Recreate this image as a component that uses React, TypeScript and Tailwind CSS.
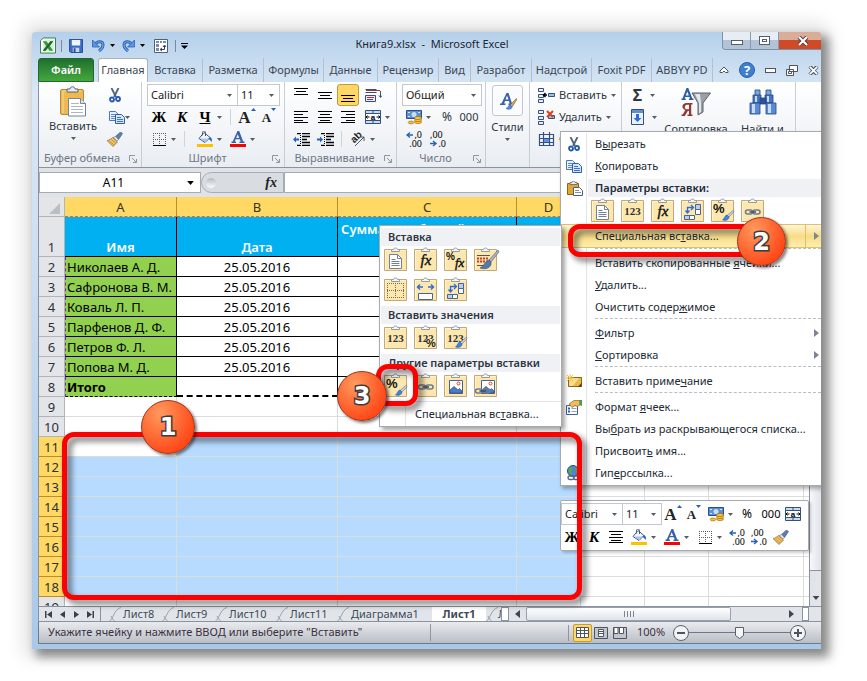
import React from "react";
import clsx from "clsx";

interface IconProps {
  className?: string;
}

interface BoxProps {
  className?: string;
  title?: string;
  children?: React.ReactNode;
}

/* ---------- small icons ---------- */

const Caret = ({ className = "w-[5px] h-[3px] text-[#555b66]" }: IconProps) => (
  <svg viewBox="0 0 5 3" className={clsx("shrink-0", className)} fill="currentColor">
    <path d="M0 0h5L2.5 3z" />
  </svg>
);

const SideArrow = ({ className }: IconProps) => (
  <svg viewBox="0 0 5 8" className={clsx("h-2 w-[5px] shrink-0", className)} fill="currentColor">
    <path d="M0 0l5 4-5 4z" />
  </svg>
);

const LaunchIcon = () => (
  <svg width="8" height="8" viewBox="0 0 8 8" fill="none" stroke="#8d95a1">
    <path d="M.5 6V.5H6M3 3l4 4M7.500 4v3.500H4" />
  </svg>
);

const ExcelIcon = () => (
  <svg width="16" height="17" viewBox="0 0 17 17">
    <path d="M3.500.5h13v16h-16v-13z" fill="#fff" stroke="#2c7a3f" />
    <path d="M5 2h10v13H3V4z" fill="#dcefd8" />
    <path d="M3 4h4l2 3 2-3h3l-3.500 5 3.500 5h-4l-2-3-2 3H3l3.500-5z" fill="#2f9a3f" />
    <path d="M11 4h3l-8 10H3z" fill="#1d6b2c" />
  </svg>
);

const SaveIcon = () => (
  <svg width="14" height="14" viewBox="0 0 15 15">
    <path d="M.5.5h14v14H2l-1.500-1.500z" fill="#3b6cc4" stroke="#234a94" />
    <path d="M3 1h9v6H3z" fill="#eef4fc" />
    <path d="M4 9.500h7V14H4z" fill="#c9d6ea" />
    <path d="M5 10h2v4H5z" fill="#234a94" />
  </svg>
);

const UndoIcon = ({ className }: IconProps) => (
  <svg width="13" height="13" viewBox="0 0 13 13" className={className}>
    <path d="M3 5.500C5 2 11 1.500 11 6c0 3-2 4.500-4 6" fill="none" stroke="#2f5fb5" strokeWidth="3" />
    <path d="M3 5.500C5 2 11 1.500 11 6c0 3-2 4.500-4 6" fill="none" stroke="#6ba3ea" strokeWidth="1.200" />
    <path d="M.5 1v7h7z" fill="#5b95e3" stroke="#2f5fb5" strokeWidth=".8" />
  </svg>
);

const PivotIcon = () => (
  <svg width="14" height="14" viewBox="0 0 14 14">
    <path d="M.5.5h13v13H.5z" fill="#fff" stroke="#4d5f80" />
    <path d="M2 2h3v2H2zM6 2h2v2H6zM9 2h3v2H9zM2 5h3v3H2zM2 9h3v3H2z" fill="#7d8aa3" />
    <path d="M7 10.500h3.500V7M9 8l1.500-2L12 8M8 9l-2 1.500L8 12" fill="none" stroke="#333c50" />
  </svg>
);

const PasteBig = () => (
  <svg width="28" height="31" viewBox="0 0 28 31">
    <rect x="1.500" y="3.500" width="23" height="25" rx="1.500" fill="#ecb953" stroke="#b98936" />
    <path d="M4 27V5h18" fill="none" stroke="#f7d995" />
    <path d="M8 6V3h3c0-3 5-3 5 0h3v3z" fill="#e9edf2" stroke="#59606b" />
    <path d="M9.500 12.500h12l5 5v12.500h-17z" fill="#fff" stroke="#77839a" />
    <path d="M21.500 12.500v5h5" fill="#dbe4f1" stroke="#77839a" />
    <path d="M12 17.500h8M12 20.500h12M12 23.500h12M12 26.500h12" stroke="#a8b5ca" />
  </svg>
);

const CutIcon = () => (
  <svg width="12" height="15" viewBox="0 0 12 15" fill="none">
    <path d="M2.500 0l4.500 9M9.500 0L5 9" stroke="#4f6379" strokeWidth="1.800" />
    <circle cx="3" cy="11.500" r="2" stroke="#2458b4" strokeWidth="1.800" />
    <circle cx="9" cy="11" r="2" stroke="#2458b4" strokeWidth="1.800" />
  </svg>
);

const CopyIcon = () => (
  <svg width="16" height="13" viewBox="0 0 16 13">
    <path d="M.5.5h6l3 3v6h-9z" fill="#e6f0fc" stroke="#4f77b5" />
    <path d="M2 3.500h4M2 5.500h4M2 7.500h4" stroke="#5f8bd0" />
    <path d="M6.500 3.500h6l3 3v6h-9z" fill="#d5e6fb" stroke="#2f5ca8" />
    <path d="M8 6.500h4M8 8.500h6M8 10.500h6" stroke="#3c73c4" />
  </svg>
);

const BrushIcon = () => (
  <svg width="16" height="15" viewBox="0 0 16 15">
    <path d="M15.500 1.500L13.500 0 8.500 4.500l3 3z" fill="#5d7fb0" stroke="#3b4d6b" strokeWidth=".6" />
    <path d="M8.500 4.500l3 3-1.500 1.500-4-3.500z" fill="#dde3ea" stroke="#6f7a8a" strokeWidth=".6" />
    <path d="M5.500 5.500l5 4.500L6 14.500 0 8.500c2-.2 4-1.500 5.500-3z" fill="#efc268" stroke="#8b6321" strokeWidth=".7" />
    <path d="M2.500 9l4.500 4M4.500 7.500L9 11.500" stroke="#b17f2e" strokeWidth=".7" />
  </svg>
);

const BordersIcon = () => (
  <svg width="13" height="13" viewBox="0 0 13 13" fill="none">
    <path d="M.5 0v12M6.500 0v12M12.500 0v12M0 .5h13M0 6.500h13" stroke="#58606c" strokeDasharray="1 1" />
    <path d="M0 12.500h13" stroke="#000" />
  </svg>
);

const FillIcon = () => (
  <svg width="16" height="16" viewBox="0 0 16 16">
    <path d="M7 1.500l6 5-5 5-6-4z" fill="#f2f6fb" stroke="#3c5b8c" />
    <path d="M3 7.500h9L8 11z" fill="#a9c6ea" />
    <path d="M5.500 4.500V1.500c0-2 3-2 3 0V5" fill="none" stroke="#4b5563" />
    <path d="M13 6c2 1 2.500 3 1.500 5-.8-1.500-1.500-2.500-3-3z" fill="#2860b8" />
    <path d="M0 13h16v3H0z" fill="#ffc000" />
  </svg>
);

const FontColorIcon = () => (
  <svg width="16" height="16" viewBox="0 0 16 16">
    <path d="M7.500 0h1.700l4 10.500h1.300V12h-5v-1.500h1.200l-.8-2.200H5.600l-.8 2.200H6V12H1.500v-1.500h1.200zM7.700 3.300L6.200 7h3z" fill="#3a62ab" />
    <path d="M0 13h16v3H0z" fill="#f00" />
  </svg>
);

const linePaths = {
  top: "M1 .5h14M3 3.500h10M1 6.500h14",
  middle: "M1 4.500h14M3 7.500h10M1 10.500h14",
  bottom: "M1 7.500h14M3 10.500h10M1 13.500h14",
  left: "M1 1.500h14M1 4.500h9M1 7.500h14M1 10.500h9M1 12.500h14",
  center: "M1 1.500h14M3 4.500h10M1 7.500h14M3 10.500h10M1 12.500h14",
  right: "M1 1.500h14M6 4.500h9M1 7.500h14M6 10.500h9M1 12.500h14",
};

const LinesIcon = ({ kind }: { kind: keyof typeof linePaths }) => (
  <svg width="16" height="14" viewBox="0 0 16 14" stroke="#000" strokeWidth="1.200">
    <path d={linePaths[kind]} />
  </svg>
);

const IndentIcon = ({ out }: { out?: boolean }) => (
  <svg width="17" height="13" viewBox="0 0 17 13" fill="none">
    <path d="M4 .5h3M9 .5h8M4 12.500h3M9 12.500h8M9 3.500h8M9 6.500h5M9 9.500h8" stroke="#000" strokeWidth="1.300" />
    <path d="M7.500 0v13" stroke="#000" strokeDasharray="1 1" />
    <path d={out ? "M0 6.500l3-3v2h3v2H3v2z" : "M6 6.500l-3-3v2H0v2h3v2z"} fill="#2860b8" />
  </svg>
);

const WrapIcon = () => (
  <svg width="17" height="15" viewBox="0 0 17 15" fill="none">
    <path d="M.5 1.500h11M.5 4.500h11" stroke="#35507f" />
    <path d="M.5 7.500h10v6H.5z" fill="#e5edf8" stroke="#35507f" />
    <path d="M1 2.500h14M2 9.500h7M2 11.500h6" stroke="#a0353a" />
    <path d="M15.500 3v6M14 7.500l1.500 2 1.500-2" stroke="#35507f" />
  </svg>
);

const MergeIcon = () => (
  <svg width="16" height="14" viewBox="0 0 16 14" fill="none">
    <path d="M.5.5h15v13H.5z" fill="#c7dbf4" stroke="#35507f" />
    <path d="M0 3.500h16M0 10.500h16M8 0v3M8 11v3" stroke="#35507f" />
    <path d="M1 4h14v6H1z" fill="#fff" />
    <path d="M1 7h3.500M15 7h-3.500M2.500 5.500L1 7l1.500 1.500M13.500 5.500L15 7l-1.500 1.500" stroke="#000" />
    <text x="8" y="9.500" textAnchor="middle" fontFamily="Liberation Sans" fontSize="8" fontWeight="700" fill="#000">a</text>
  </svg>
);

const OrientIcon = () => (
  <svg width="16" height="16" viewBox="0 0 16 16">
    <text x="2" y="11" transform="rotate(-45 5 9)" fontFamily="Liberation Sans" fontSize="10" fontWeight="700" fill="#222">ab</text>
    <path d="M5 15l9-9M14 10V6h-4" fill="none" stroke="#555" />
  </svg>
);

const MoneyIcon = () => (
  <svg width="17" height="16" viewBox="0 0 17 16">
    <path d="M.5 1.500h15v8H.5z" fill="#5e8fd4" stroke="#2a4f91" />
    <circle cx="8" cy="5.500" r="2.500" fill="#c9defa" />
    <path d="M2 3.500h2M12 3.500h2M2 7.500h2" stroke="#dbe9fb" />
    <g fill="#f5c33c" stroke="#a4710f" strokeWidth=".7">
      <ellipse cx="12" cy="13" rx="3.500" ry="1.600" />
      <ellipse cx="12" cy="11" rx="3.500" ry="1.600" />
      <ellipse cx="12" cy="9" rx="3.500" ry="1.600" />
      <ellipse cx="5" cy="13.500" rx="2.800" ry="1.400" />
    </g>
  </svg>
);

const DecimalIcon = ({ less }: { less?: boolean }) => (
  <svg width="17" height="16" viewBox="0 0 17 16" fontFamily="Noto Sans" fontSize="9" fontWeight="500" fill="#222">
    <text x={less ? 0 : 16} y="7" textAnchor={less ? "start" : "end"}>{less ? ",00" : ",0"}</text>
    <text x="16" y="16" textAnchor="end">{less ? ",0" : ",00"}</text>
    <path d={less ? "M0 12.500h5M3 10l3 2.500L3 15" : "M7 4H2M4 1.500L1 4l3 2.500"} fill="none" stroke="#2860b8" strokeWidth="1.400" />
  </svg>
);

const StylesIcon = () => (
  <svg width="18" height="18" viewBox="0 0 18 18">
    <path d="M7.500 1h2l3.500 10.500h1.500V13H9.500v-1.500h1L10 9H6l-.8 2.500h1.300V13H1v-1.500h1.500zM8 3.500L6.500 7.500h3z" fill="#3a62ab" />
    <path d="M17.500 6.500L11 13l2 2 4.500-7z" fill="#d9a24b" stroke="#7b5d2d" strokeWidth=".6" />
    <path d="M11 13c-2 0-1 2.500-4 3.500 3 1.500 6 .5 6-1.500z" fill="#4f8be0" stroke="#2860b8" strokeWidth=".6" />
  </svg>
);

const CellsIcon = ({ kind }: { kind: "insert" | "delete" | "format" }) => (
  <svg width="17" height="15" viewBox="0 0 17 15" fill="none" stroke="#35507f">
    {kind === "format" ? (
      <>
        <path d="M1.500 2.500h14v11h-14zM1 6.500h15M1 10.500h15M5.500 0v14M11.500 0v14" strokeWidth="1.200" />
        <path d="M6 7h5v3H6z" fill="#5b95e3" stroke="none" />
      </>
    ) : (
      <>
        <path d="M.5.5h5v3h-5zM.5 6.500h5v3h-5zM.5 11.500h5v3h-5z" fill="#e7eef8" />
        <path d="M10.500 5.500h6v3h-6z" fill="#9dbfe9" />
        {kind === "insert" ? <path d="M9 7H6M7.500 5L5.500 7l2 2" stroke="#000" strokeWidth="1.400" /> : <path d="M9 1l6 6M15 1L9 7" stroke="#e0401c" strokeWidth="2" />}
      </>
    )}
  </svg>
);

const FillDownIcon = () => (
  <svg width="13" height="16" viewBox="0 0 13 16">
    <path d="M.5.5h12v15H.5z" fill="#e8f1fc" stroke="#35507f" />
    <path d="M1 1h11v3H1z" fill="#5e8fd4" />
    <path d="M5 5h3v4h2.500l-4 4-4-4H5z" fill="#2d6cd0" />
  </svg>
);

const SortIcon = () => (
  <svg width="30" height="29" viewBox="0 0 30 29">
    <path d="M11 5h18.500L22 15v9l-5 3V15z" fill="#9aa0a8" stroke="#5c626b" />
    <path d="M14 6h5l1 9v9l-2 1.500V15z" fill="#e3e6ea" />
    <path d="M5.500 0h1.800l4 10.500h1.200V12H8v-1.500h1L8.500 9H4.200l-.6 1.500h1.200V12H.5v-1.500h1zM6.300 3.500L4.800 7.500h3z" fill="#2f5ca8" />
    <path d="M11.500 15v1.500h-1.300v10h1.300V28H6.500v-1.500H8V23H6.800l-3 5H.5v-1.500h1.300L4.300 22C0 20.500.8 15 5.500 15zM8 16.700H6c-2.800 0-2.800 4.600 0 4.600h2z" fill="#9c3531" />
  </svg>
);

const FindIcon = () => (
  <svg width="28" height="26" viewBox="0 0 28 26" stroke="#24467f" strokeWidth=".8">
    <path d="M6 1h5v6H6zM17 1h5v6h-5z" fill="#7ea4dd" />
    <path d="M4 6h8v8H4zM16 6h8v8h-8z" fill="#4676c2" />
    <path d="M11 9h6v6h-6z" fill="#2c549b" />
    <path d="M1 14h10v11H1zM17 14h10v11H17z" fill="#5b8bd6" />
    <path d="M3 15h3v9H3zM19 15h3v9h-3zM6 7h2v6H6zM18 7h2v6h-2z" fill="#c6dbf8" stroke="none" />
  </svg>
);

/* ---------- paste option tiles ---------- */

type TileKind =
  | "paste" | "values" | "fx" | "transpose" | "format" | "link" | "fxFormat" | "source"
  | "noBorder" | "width" | "valuesPct" | "valuesBrush" | "picture" | "pictureLink";

const MiniBrush = () => (
  <g>
    <path d="M22.500 11L16 16.500l1.500 2L23 13z" fill="#c9ced6" stroke="#5b6470" strokeWidth=".5" />
    <path d="M16 16c-2 0-2.500 3.500-4.500 5 3 1 6.500 0 6.500-3z" fill="#3f82de" stroke="#22529e" strokeWidth=".5" />
  </g>
);

const MiniLink = () => (
  <g fill="none" stroke="#6d7b93" strokeWidth="1.600">
    <rect x="4.500" y="11" width="7" height="4" rx="2" />
    <rect x="12" y="11" width="7" height="4" rx="2" />
    <path d="M8.500 13h6.500" stroke="#414e66" />
  </g>
);

const MiniPicture = () => (
  <g>
    <path d="M5.500 6.500h13v13h-13z" fill="#fff" stroke="#4a6390" />
    <path d="M6 19v-3l4-3.500 4 3.500 1.500-1.500 2.500 2.500v2z" fill="#4b7dc4" stroke="#2d4d83" strokeWidth=".7" />
    <circle cx="14.500" cy="9.500" r="1.500" fill="#fff" stroke="#d2452c" />
  </g>
);

const Num = () => (
  <text x="11.500" y="15.500" textAnchor="middle" fontFamily="Liberation Serif" fontSize="11" fontWeight="700" fill="#333">123</text>
);

const tileArt: Record<TileKind, React.ReactNode> = {
  paste: (
    <>
      <path d="M5.500 6.500h8l4 4v10h-12z" fill="#fff" stroke="#71809b" />
      <path d="M13.500 6.500v4h4M7.500 11.500h4M7.500 13.500h8M7.500 15.500h8M7.500 17.500h8" fill="none" stroke="#71809b" />
    </>
  ),
  values: <Num />,
  fx: (
    <text x="12" y="17" textAnchor="middle" fontFamily="Liberation Serif" fontSize="15" fontStyle="italic" fill="#111" stroke="#111" strokeWidth=".4">fx</text>
  ),
  transpose: (
    <>
      <path d="M14.500 5.500h5v5h-5zM3.500 16.500h5v4h-5z" fill="#b8d0ef" stroke="#4a6390" />
      <path d="M14.500 10.500h5v5h-5zM8.500 16.500h5v4h-5z" fill="#fff" stroke="#4a6390" />
      <path d="M6.500 13V8.500h5M4.500 11.500l2 2.500 2-2.500M10 6l2.500 2.500L10 11" fill="none" stroke="#2d6cd0" strokeWidth="1.300" />
    </>
  ),
  format: (
    <>
      <text x="2" y="14" fontFamily="Liberation Sans" fontSize="13" fontWeight="700" fill="#111">%</text>
      <MiniBrush />
    </>
  ),
  link: <MiniLink />,
  fxFormat: (
    <>
      <text x="2" y="12" fontFamily="Liberation Sans" fontSize="10" fontWeight="700" fill="#111">%</text>
      <text x="11" y="19" fontFamily="Liberation Serif" fontSize="13" fontStyle="italic" fill="#111" stroke="#111" strokeWidth=".4">fx</text>
    </>
  ),
  source: (
    <>
      <path d="M3 7.500h13M3 17.500h13" stroke="#555" />
      <path d="M3 10.500h12M3 13.500h11" stroke="#d8351c" strokeWidth="2" strokeDasharray="2 1" />
      <path d="M24 2l-9 10 2 2 8-10z" fill="#aab2bd" stroke="#555d69" strokeWidth=".6" />
      <path d="M15 12c-4 1-4 5-9 8 5 2 12 0 11-6z" fill="#5679ab" stroke="#32507e" strokeWidth=".6" />
    </>
  ),
  noBorder: (
    <path d="M3.500 5v15M11.500 5v15M19.500 5v15M3 5.500h17M3 12.500h17M3 19.500h17" stroke="#77704f" strokeDasharray="1 1" />
  ),
  width: (
    <>
      <path d="M4 9h5M6 6.500L3.500 9 6 11.500M19 9h-5M17 6.500L19.500 9 17 11.500" fill="none" stroke="#2d6cd0" strokeWidth="1.400" />
      <path d="M4.500 21.500v-6h14v6z" fill="#fff" stroke="#4a6390" />
    </>
  ),
  valuesPct: (
    <>
      <Num />
      <path d="M13 13h8v8h-8z" fill="#fce8ae" />
      <text x="12" y="21" fontFamily="Liberation Sans" fontSize="11" fontWeight="700" fill="#222">%</text>
    </>
  ),
  valuesBrush: (
    <>
      <Num />
      <MiniBrush />
    </>
  ),
  picture: <MiniPicture />,
  pictureLink: (
    <>
      <g transform="translate(2 0)">
        <MiniPicture />
      </g>
      <g transform="translate(-3 4)">
        <MiniLink />
      </g>
    </>
  ),
};

const PasteTile = ({ kind, title }: { kind: TileKind; title: string }) => (
  <button title={title} aria-label={title} className="h-6 w-[23px] shrink-0">
    <svg width="23" height="24" viewBox="0 0 23 24" className="overflow-visible">
      <path d="M.5 1.500h22v21H.5z" fill="#fce8ae" stroke="#c4a878" />
      <path d="M1.500 22V2.500h20" fill="none" stroke="#fff4d2" />
      <path d="M7.500 3.500v-2h2c0-2 4-2 4 0h2v2z" fill="#f6f6f6" stroke="#9a9a9a" />
      {tileArt[kind]}
    </svg>
  </button>
);

/* ---------- ribbon parts ---------- */

const Btn = ({ className = "w-6", title, children }: BoxProps) => (
  <button title={title} className={clsx("flex h-[22px] shrink-0 items-center justify-center", className)}>
    {children}
  </button>
);

const Sep = () => <span className="mx-1 h-4 w-px shrink-0 bg-[#cfd4db]" />;

const Combo = ({ label, value, className }: { label: string; value: string; className?: string }) => (
  <span className={clsx("relative flex h-[22px] shrink-0 items-center border border-[#c3c8cf] bg-white", className)}>
    <select aria-label={label} defaultValue={value} className="w-full appearance-none bg-transparent pl-[3px] text-[11px] text-[#222] outline-none">
      <option>{value}</option>
    </select>
    <Caret className="pointer-events-none absolute right-[5px] h-[3px] w-[5px] text-[#555b66]" />
  </span>
);

const GrowFont = () => (
  <span className="flex items-start font-['Liberation_Serif',serif] text-[17px] leading-[19px] font-bold text-[#222]">
    A
    <Caret className="h-[3px] w-[5px] rotate-180 text-[#2860b8]" />
  </span>
);

const ShrinkFont = () => (
  <span className="flex items-start font-['Liberation_Serif',serif] text-[13px] leading-[19px] font-bold text-[#222]">
    A
    <Caret className="h-[3px] w-[5px] text-[#2860b8]" />
  </span>
);

const Group = ({ label, className, launcher, children }: { label?: string; className?: string; launcher?: boolean; children?: React.ReactNode }) => (
  <section className={clsx("flex shrink-0 flex-col border-r border-[#c8ced6] pt-0.5", className)}>
    <div className="h-[66px]">{children}</div>
    <div className="flex h-[17px] items-center text-[#6c7785]">
      <span className="flex-1 text-center whitespace-nowrap">{label}</span>
      {launcher && (
        <button title={label} className="px-1">
          <LaunchIcon />
        </button>
      )}
    </div>
  </section>
);

const tabs = [
  { name: "Вставка", width: "w-[55px]" },
  { name: "Разметка", width: "w-[61px]" },
  { name: "Формулы", width: "w-[60px]" },
  { name: "Данные", width: "w-[54px]" },
  { name: "Рецензир", width: "w-[61px]" },
  { name: "Вид", width: "w-8" },
  { name: "Разработ", width: "w-[61px]" },
  { name: "Надстрой", width: "w-[60px]" },
  { name: "Foxit PDF", width: "w-[60px]" },
  { name: "ABBYY PD", width: "w-[61px]" },
];

const TitleBar = () => (
  <header className="flex h-[26px] items-start pl-2">
    <div className="flex h-[26px] items-center gap-[5px] pt-px">
      <ExcelIcon />
      <span className="h-3 w-px bg-[#7b8898]" />
      <button title="Сохранить" className="ml-0.5"><SaveIcon /></button>
      <button title="Отменить" className="ml-1"><UndoIcon /></button>
      <Caret className="h-[3px] w-[5px] text-black" />
      <button title="Вернуть" className="ml-0.5"><UndoIcon className="-scale-x-100" /></button>
      <Caret className="h-[3px] w-[5px] text-black" />
      <button title="Сводная таблица" className="ml-1"><PivotIcon /></button>
      <span className="ml-0.5 h-3 w-px bg-[#7b8898]" />
      <svg width="7" height="6" viewBox="0 0 7 6"><path d="M0 0h7v1H0zM0 2.500h7L3.500 6z" /></svg>
    </div>
    <h1 className="flex-1 pt-1 pr-[46px] text-center leading-4 whitespace-pre text-[#1d2733]">Книга9.xlsx  -  Microsoft Excel</h1>
    <div className="flex h-[18px] overflow-hidden rounded-bl-[4px] border-b border-l border-[#7f8fa6]">
      <button title="Свернуть" className="flex w-7 items-end justify-center border-r border-[#8a99ad] bg-linear-to-b from-[#e6edf5] from-45% to-[#b3c3d6] to-50% pb-1">
        <span className="h-[5px] w-3 border border-[#555e6b] bg-white" />
      </button>
      <button title="Развернуть" className="flex w-7 items-center justify-center border-r border-[#8a99ad] bg-linear-to-b from-[#e6edf5] from-45% to-[#b3c3d6] to-50%">
        <span className="h-[9px] w-[11px] border border-[#555e6b] bg-white p-0.5">
          <span className="block h-full border border-[#555e6b]" />
        </span>
      </button>
      <button title="Закрыть" className="flex w-[42px] items-center justify-center bg-linear-to-b from-[#d9ad97] from-45% to-[#d04a26] to-50% pl-1.5">
        <svg width="12" height="10" viewBox="0 0 12 10"><path d="M2 1l8 8M10 1L2 9" stroke="#4b3c3c" strokeWidth="4" /><path d="M2 1l8 8M10 1L2 9" stroke="#fff" strokeWidth="2.200" /></svg>
      </button>
    </div>
  </header>
);

const TabRow = () => (
  <nav className="ml-1.5 flex h-6 items-stretch text-[#3c4754]">
    <button className="mr-1 w-14 shrink-0 rounded-t-[3px] border border-[#1c6b2c] bg-linear-to-b from-[#1f7030] to-[#45a83c] font-semibold text-white">Файл</button>
    <button className="w-[50px] shrink-0 rounded-t-[3px] border border-b-0 border-[#a9b3bf] bg-white whitespace-nowrap">
      <span className="flex justify-center">Главная</span>
    </button>
    {tabs.map((tab) => (
      <button key={tab.name} className={clsx("shrink-0 overflow-hidden border-r border-[#b4c0ce] whitespace-nowrap", tab.width)}>
        <span className="flex justify-center">{tab.name}</span>
      </button>
    ))}
    <div className="flex shrink-0 items-center gap-2.5 pl-1.5">
      <svg width="10" height="8" viewBox="0 0 10 8"><path d="M1 6.500V5l4-4 4 4v1.500H6.500L5 5 3.500 6.500z" fill="#fff" stroke="#4b5563" /></svg>
      <button title="Справка" className="flex h-4 w-4 items-center justify-center rounded-full border border-[#2c5ea8] bg-[#3f7fd0] text-[13px] leading-none font-bold text-white">?</button>
      <span className="h-[5px] w-[11px] border border-[#4b5563] bg-white" />
      <svg width="12" height="11" viewBox="0 0 12 11"><path d="M3.500.5h8v6h-8zM.5 4.500h7v6h-7z" fill="#fff" stroke="#4b5563" /><path d="M2.500 6.500h3v2h-3z" fill="#fff" stroke="#4b5563" /></svg>
      <svg width="11" height="9" viewBox="0 0 12 9"><path d="M2 0l8 9M10 0L2 9" stroke="#4b5563" strokeWidth="4" /><path d="M2 .5l8 8M10 .5l-8 8" stroke="#fff" strokeWidth="2" /></svg>
    </div>
  </nav>
);

const Ribbon = () => (
  <div className="ml-1.5 flex h-[86px] overflow-hidden border-b border-l border-[#8b939e] bg-linear-to-b from-white to-[#e9edf2] text-[#2d3642]">
    <Group label="Буфер обмена" launcher className="w-[103px]">
      <div className="flex">
        <button className="flex w-[68px] flex-col items-center pt-0.5">
          <PasteBig />
          <span className="leading-[18px]">Вставить</span>
          <Caret className="mt-0.5 h-[3px] w-[5px] text-[#555b66]" />
        </button>
        <div className="flex flex-col items-start">
          <Btn className="w-4" title="Вырезать"><CutIcon /></Btn>
          <Btn className="w-6 justify-between" title="Копировать"><CopyIcon /><Caret /></Btn>
          <Btn className="w-4" title="Формат по образцу"><BrushIcon /></Btn>
        </div>
      </div>
    </Group>

    <Group label="Шрифт" launcher className="w-[143px] pl-[5px]">
      <div className="flex">
        <Combo label="Шрифт" value="Calibri" className="w-[91px]" />
        <Combo label="Размер шрифта" value="11" className="-ml-px w-[43px]" />
      </div>
      <div className="flex items-center font-['Liberation_Serif',serif] text-[15px] font-bold text-black">
        <Btn title="Полужирный">Ж</Btn>
        <Btn className="w-[22px]" title="Курсив"><i>К</i></Btn>
        <Btn title="Подчеркнутый"><span className="underline">Ч</span></Btn>
        <Caret />
        <span className="w-1" />
        <Sep />
        <Btn title="Увеличить размер"><GrowFont /></Btn>
        <Btn className="w-5" title="Уменьшить размер"><ShrinkFont /></Btn>
      </div>
      <div className="flex items-center">
        <Btn title="Границы"><BordersIcon /></Btn>
        <Caret />
        <span className="w-1" />
        <Sep />
        <Btn title="Цвет заливки" className="ml-1 w-6"><FillIcon /></Btn>
        <Caret />
        <Btn title="Цвет текста" className="ml-1 w-6"><FontColorIcon /></Btn>
        <Caret />
      </div>
    </Group>

    <Group label="Выравнивание" launcher className="w-[112px] pl-1">
      <div className="flex">
        <Btn title="По верхнему краю"><LinesIcon kind="top" /></Btn>
        <Btn title="По середине"><LinesIcon kind="middle" /></Btn>
        <Btn title="По нижнему краю" className="w-[22px] rounded-[3px] border border-[#c29b3a] bg-[#ffd766]"><LinesIcon kind="bottom" /></Btn>
        <Btn title="Перенос текста" className="ml-0.5 w-6"><WrapIcon /></Btn>
      </div>
      <div className="flex items-center">
        <Btn title="По левому краю"><LinesIcon kind="left" /></Btn>
        <Btn title="По центру"><LinesIcon kind="center" /></Btn>
        <Btn title="По правому краю" className="w-[22px]"><LinesIcon kind="right" /></Btn>
        <Btn title="Объединить ячейки" className="ml-0.5 w-6"><MergeIcon /></Btn>
        <Caret />
      </div>
      <div className="flex items-center">
        <Btn title="Уменьшить отступ"><IndentIcon out /></Btn>
        <Btn title="Увеличить отступ"><IndentIcon /></Btn>
        <Sep />
        <Btn title="Ориентация"><OrientIcon /></Btn>
        <Caret />
      </div>
    </Group>

    <Group label="Число" launcher className="w-[89px] pl-[5px]">
      <Combo label="Числовой формат" value="Общий" className="w-[80px]" />
      <div className="flex items-center">
        <Btn title="Денежный формат"><MoneyIcon /></Btn>
        <Caret />
        <Btn title="Процентный формат" className="ml-1 w-6 text-xs">%</Btn>
        <Btn title="Формат с разделителями" className="w-5">000</Btn>
      </div>
      <div className="flex">
        <Btn title="Увеличить разрядность"><DecimalIcon /></Btn>
        <Btn title="Уменьшить разрядность"><DecimalIcon less /></Btn>
      </div>
    </Group>

    <Group className="w-11">
      <button className="flex w-full flex-col items-center pt-px">
        <span className="flex h-[31px] w-[31px] items-center justify-center rounded-[3px] border border-[#c3c8cf] bg-[#fafcff]"><StylesIcon /></span>
        <span className="mt-0.5 leading-[18px]">Стили</span>
        <Caret className="mt-0.5 h-[3px] w-[5px] text-[#555b66]" />
      </button>
    </Group>

    <Group label="Ячейки" className="w-[92px] pl-2">
      <Btn title="Вставить" className="gap-1"><CellsIcon kind="insert" />Вставить <Caret /></Btn>
      <Btn title="Удалить" className="gap-1"><CellsIcon kind="delete" />Удалить <Caret /></Btn>
      <Btn title="Формат" className="gap-1"><CellsIcon kind="format" />Формат <Caret /></Btn>
    </Group>

    <Group label="Редактирование" className="w-[174px]">
      <div className="flex">
        <div className="flex w-10 flex-col pl-1">
          <Btn title="Сумма" className="gap-2"><b className="text-base">Σ</b><Caret /></Btn>
          <Btn title="Заполнить" className="gap-2"><FillDownIcon /><Caret /></Btn>
        </div>
        <button className="flex w-[68px] flex-col items-center pt-1">
          <SortIcon />
          <span className="pt-1 leading-4">Сортировка</span>
        </button>
        <button className="flex flex-1 flex-col items-center pt-[5px]">
          <FindIcon />
          <span className="pt-1.5 leading-4">Найти и</span>
        </button>
      </div>
    </Group>
  </div>
);

const FormulaBar = () => (
  <div className="ml-1.5 flex h-[29px] border-l border-[#8b939e] bg-[#dfe3e8] py-1">
    <label className="flex w-[162px] shrink-0 items-center border border-[#a5acb5] bg-white pr-1.5">
      <input aria-label="Имя ячейки" defaultValue="A11" className="w-full min-w-0 text-center text-xs text-black outline-none" />
      <Caret className="h-1 w-[7px] text-black" />
    </label>
    <div className="flex w-[83px] shrink-0 items-center justify-between rounded-l-full border border-[#a5acb5] bg-[#d9dce1] pr-1.5 pl-1">
      <span className="h-2.5 w-2.5 rounded-full bg-linear-to-b from-[#b5bac1] to-white" />
      <button title="Вставить функцию" className="font-['Liberation_Serif',serif] text-sm leading-none font-bold text-[#222] italic">fx</button>
    </div>
    <input aria-label="Строка формул" className="min-w-0 flex-1 border-y border-l border-[#a5acb5] bg-white outline-none" />
  </div>
);

/* ---------- sheet ---------- */

const people = ["Николаев А. Д.", "Сафронова В. М.", "Коваль Л. П.", "Парфенов Д. Ф.", "Петров Ф. Л.", "Попова М. Д."];
const emptyRows = [9, 10, 11, 12, 13, 14, 15, 16, 17, 18, 19];

const RowHead = ({ n }: { n: number }) => (
  <th
    scope="row"
    className={clsx(
      "border-r border-b text-center align-bottom text-[13px] leading-[17px] font-normal text-[#2b3038]",
      n >= 11 && n <= 18 ? "border-[#c08a2e] bg-[#ffd964]" : "border-[#b1b5ba] bg-[#e3e5e9]"
    )}
  >
    {n}
  </th>
);

const Blanks = () => (
  <>
    <td className="border-r border-b border-[#dadcdd]" />
    <td className="border-r border-b border-[#dadcdd]" />
    <td className="border-r border-b border-[#dadcdd]" />
    <td className="border-b border-[#dadcdd]" />
  </>
);

const headCell = "border-r border-b border-black bg-[#00b0f0] text-center align-bottom leading-[18px] font-semibold text-white";
const nameCell = "border-r border-b border-l border-black border-l-[#7030a0] bg-[#92d050] pl-px align-bottom leading-[17px] whitespace-nowrap [border-left-style:dashed]";
const antsBelow = "border-r border-b-2 border-black [border-bottom-style:dashed]";

const Sheet = () => (
  <div className="ml-1.5 flex h-[409px] overflow-hidden border-l border-[#8b939e] bg-white">
    <div className="min-w-0 flex-1 overflow-hidden">
      <table className="w-full table-fixed border-separate border-spacing-0 text-[13px] text-black">
        <colgroup>
          <col className="w-[26px]" />
          <col className="w-[112px]" />
          <col className="w-[161px]" />
          <col className="w-[179px]" />
          <col className="w-16" />
          <col className="w-16" />
          <col className="w-16" />
          <col className="w-[95px]" />
          <col />
        </colgroup>
        <thead>
          <tr className="h-5">
            <td className="border-r border-b border-[#b1b5ba] bg-[#e3e5e9] align-bottom">
              <svg width="11" height="11" viewBox="0 0 11 11" className="mb-0.5 ml-2.5"><path d="M11 0v11H0z" fill="#b9bdc4" /></svg>
            </td>
            {["A", "B", "C", "D"].map((c) => (
              <th key={c} scope="col" className="border-r border-b border-r-[#c08a2e] border-b-[#f4602a] bg-[#ffd964] p-0 leading-[18px] font-normal text-[#3a3426] [border-bottom-style:dashed]">{c}</th>
            ))}
            {["E", "F", "G", ""].map((c) => (
              <th key={c} scope="col" className="border-r border-b border-[#b1b5ba] bg-[#e3e5e9] p-0 leading-[18px] font-normal">{c}</th>
            ))}
          </tr>
        </thead>
        <tbody>
          <tr className="h-10">
            <RowHead n={1} />
            <td className={headCell}>Имя</td>
            <td className={headCell}>Дата</td>
            <td className={clsx(headCell, "whitespace-nowrap")}>Сумма заработной платы,<br />руб.</td>
            <td className={headCell}>Премия, руб.</td>
            <Blanks />
          </tr>
          {people.map((person, i) => (
            <tr key={person} className="h-5">
              <RowHead n={i + 2} />
              <td className={nameCell}>{person}</td>
              <td className="border-r border-b border-black text-center align-bottom leading-[17px]">25.05.2016</td>
              <td className="border-r border-b border-black" />
              <td className="border-r border-b border-black" />
              <Blanks />
            </tr>
          ))}
          <tr className="h-5">
            <RowHead n={8} />
            <td className={clsx(nameCell, "font-bold [border-bottom-style:dashed]")}>Итого</td>
            <td className={antsBelow} />
            <td className={antsBelow} />
            <td className={antsBelow} />
            <Blanks />
          </tr>
          {emptyRows.map((n) => (
            <tr key={n} className="h-5">
              <RowHead n={n} />
              {["A", "B", "C", "D"].map((c) => (
                <td
                  key={c}
                  className={clsx("border-r border-b border-[#dadcdd]", n >= 11 && n <= 18 && !(n === 11 && c === "A") && "bg-[#b7dbff]")}
                />
              ))}
              <Blanks />
            </tr>
          ))}
        </tbody>
      </table>
    </div>
    <div className="flex w-3 shrink-0 flex-col items-center border-l border-[#8b939e] bg-[#e1e5ea]">
      <div className="w-full flex-1 border-b border-[#8b939e] bg-linear-to-r from-[#f6f8fa] to-[#dfe4ea]" />
      <Caret className="my-[25px] mb-1.5 h-1 w-2 text-[#3f4752]" />
    </div>
  </div>
);

const Slash = () => (
  <svg width="12" height="15" viewBox="0 0 12 15" fill="none" stroke="#9aa2ad" className="shrink-0">
    <path d="M0 14.500C4 13 5 2 12 .5" />
    <path d="M2 9c1 2 2 4 4 5.500" />
  </svg>
);

const sheets = [
  { name: "Лист8", width: "w-[53px]" },
  { name: "Лист9", width: "w-[53px]" },
  { name: "Лист10", width: "w-[61px]" },
  { name: "Лист11", width: "w-[61px]" },
  { name: "Диаграмма1", width: "w-[95px]" },
];

const SheetTabs = () => (
  <div className="ml-1.5 flex h-4 items-stretch border-y border-l border-[#8b939e] bg-[#e1e5ea] leading-[14px] text-[#3f4a57]">
    <div className="flex w-[62px] shrink-0 items-center justify-between border-r border-[#8b939e] px-1.5 text-[#3a414c]">
      <svg width="7" height="7" viewBox="0 0 7 7" fill="currentColor"><path d="M0 0h1.500v7H0zM7 0v7L2 3.500z" /></svg>
      <svg width="5" height="7" viewBox="0 0 5 7" fill="currentColor"><path d="M5 0v7L0 3.500z" /></svg>
      <svg width="5" height="7" viewBox="0 0 5 7" fill="currentColor"><path d="M0 0v7l5-3.500z" /></svg>
      <svg width="7" height="7" viewBox="0 0 7 7" fill="currentColor"><path d="M5.500 0H7v7H5.500zM0 0v7l5-3.500z" /></svg>
    </div>
    <div className="flex w-[400px] shrink-0 overflow-hidden pl-2">
      {sheets.map((sheet) => (
        <button key={sheet.name} className={clsx("flex shrink-0 gap-0.5", sheet.width)}>
          <Slash />
          <span>{sheet.name}</span>
        </button>
      ))}
      <button className="w-[54px] shrink-0 bg-white font-bold">Лист1</button>
      <Slash />
      <span>Л</span>
    </div>
    <span className="w-2 shrink-0 border border-[#8b939e] bg-white" />
    <div className="flex flex-1 items-stretch">
      <span className="flex w-[17px] items-center justify-center"><SideArrow className="rotate-180 text-[#3f4752]" /></span>
      <span className="flex w-[205px] items-center justify-center gap-0.5 rounded-xs border border-[#98a1ad] bg-linear-to-b from-white to-[#dfe4ea]">
        <i className="h-1.5 w-px bg-[#7b8491]" />
        <i className="h-1.5 w-px bg-[#7b8491]" />
        <i className="h-1.5 w-px bg-[#7b8491]" />
        <i className="h-1.5 w-px bg-[#7b8491]" />
      </span>
      <span className="flex flex-1 items-center justify-end pr-2"><SideArrow className="text-[#3f4752]" /></span>
      <span className="mr-3 w-[7px] border border-[#8b939e] bg-white" />
    </div>
  </div>
);

const StatusBar = () => (
  <footer className="ml-1.5 flex h-[22px] items-center border-b border-l border-[#6f7a88] bg-linear-to-b from-[#e9ebee] to-[#b9bec6] text-[#3d3040]">
    <p className="flex-1 border-r border-[#8f96a0] pl-[9px] whitespace-nowrap">Укажите ячейку и нажмите ВВОД или выберите "Вставить"</p>
    <div className="h-4 w-[138px] shrink-0 border-r border-[#8f96a0]" />
    <div className="flex w-[252px] shrink-0 items-center pl-1">
      <button title="Обычный" className="flex h-[18px] w-[19px] items-center justify-center rounded-[2px] border border-[#c29b3a] bg-[#ffd766]">
        <svg width="13" height="11" viewBox="0 0 13 11" fill="#fff" stroke="#4d5561"><path d="M.5.5h12v10H.5zM0 3.500h13M0 6.500h13M4.500 0v11M8.500 0v11" /></svg>
      </button>
      <button title="Разметка страницы" className="ml-0.5">
        <svg width="14" height="12" viewBox="0 0 14 12" fill="#c3c7cd" stroke="#4d5561"><path d="M.5.5h13v11H.5z" /><path d="M4.500 2.500h5v7h-5zM5 4.500h4M5 6.500h4" fill="#fff" /></svg>
      </button>
      <button title="Страничный режим" className="ml-[5px]">
        <svg width="14" height="12" viewBox="0 0 14 12" fill="#fff" stroke="#4d5561"><path d="M.5.5h13v11H.5z" fill="#c3c7cd" /><path d="M1 .5h4v6H1zM6.500.5h4v6h-4z" /></svg>
      </button>
      <span className="ml-2.5 w-9">100%</span>
      <div className="flex flex-1 items-center pr-[15px]">
        <button title="Уменьшить" className="h-4 w-4">
          <svg width="16" height="16" viewBox="0 0 16 16"><circle cx="8" cy="8" r="7.500" fill="#f2f3f5" stroke="#5a626e" /><path d="M4 8h8" stroke="#4d5561" strokeWidth="2" /></svg>
        </button>
        <span className="flex flex-1 items-center">
          <span className="h-px flex-1 bg-[#6f7784]" />
          <svg width="9" height="12" viewBox="0 0 9 12"><path d="M.5.5h8v8l-4 3-4-3z" fill="#f5f6f8" stroke="#5a626e" /></svg>
          <span className="h-px flex-1 bg-[#6f7784]" />
        </span>
        <button title="Увеличить" className="h-4 w-4">
          <svg width="16" height="16" viewBox="0 0 16 16"><circle cx="8" cy="8" r="7.500" fill="#f2f3f5" stroke="#5a626e" /><path d="M4 8h8M8 4v8" stroke="#4d5561" strokeWidth="2" /></svg>
        </button>
      </div>
    </div>
  </footer>
);

/* ---------- menus ---------- */

// "&" marks the access key that follows it
const Mnemonic = ({ text }: { text: string }) => {
  const [before, after] = text.split("&");
  if (after === undefined) return <span>{text}</span>;
  return (
    <span>
      {before}
      <span className="underline">{after[0]}</span>
      {after.slice(1)}
    </span>
  );
};

const MenuItem = ({ text, icon, arrow }: { text: string; icon?: React.ReactNode; arrow?: boolean }) => (
  <button role="menuitem" className="flex h-[22px] w-full items-center whitespace-nowrap">
    <span className="flex w-[25px] shrink-0 justify-center">{icon}</span>
    <span className="flex flex-1 items-center justify-between pr-0.5 pl-[9px]">
      <Mnemonic text={text} />
      {arrow && <SideArrow className="text-[#7d8694]" />}
    </span>
  </button>
);

const MenuLine = () => <div className="ml-[34px] h-1 border-t border-dashed border-[#b9bdc4]" />;

const PasteIcon = () => (
  <svg width="16" height="15" viewBox="0 0 16 15">
    <path d="M.5 2.500h11v11H.5z" fill="#e5a82f" stroke="#8b6321" />
    <path d="M3 3.500V1.500h2c0-2 3-2 3 0h2v2z" fill="#e9edf2" stroke="#59606b" strokeWidth=".8" />
    <path d="M6.500 6.500h6l3 3v5h-9z" fill="#fff" stroke="#4b5f80" />
    <path d="M8 9.500h4M8 11.500h6" stroke="#7c90b3" />
  </svg>
);

const NoteIcon = () => (
  <svg width="16" height="14" viewBox="0 0 16 14">
    <path d="M2.500 3.500h13v9h-13z" fill="#e9b94c" stroke="#8b6321" />
    <path d="M3 4h10l-6 8H3z" fill="#f8dc8c" />
    <path d="M4 0v8M0 4h8M1 1l6 6M7 1L1 7" stroke="#f4c53a" />
    <path d="M12 12.500l3.500-3.500v4z" fill="#5a4216" />
  </svg>
);

const FormatIcon = () => (
  <svg width="16" height="15" viewBox="0 0 16 15">
    <path d="M.5 5.500h11v9H.5z" fill="#fff" stroke="#3b5fa0" />
    <path d="M2 8.500h2M2 11.500h2" stroke="#2860b8" strokeWidth="2" />
    <path d="M5.500 8.500h5M5.500 11.500h5" stroke="#8ea2c4" />
    <path d="M3 4l5-3.500h6V5l-3 1.500-2-1-3 2z" fill="#eebd5a" stroke="#8b6321" strokeWidth=".7" />
    <path d="M13.500 0H16v6l-2.500-1z" fill="#4a9c48" />
  </svg>
);

const GlobeIcon = () => (
  <svg width="15" height="16" viewBox="0 0 15 16">
    <circle cx="7" cy="6" r="5.500" fill="#4f86d6" stroke="#2b4f88" />
    <path d="M3 3c3-2 4 0 3 2s1 3-1 4-3-3-2-6zM9 2c3 1 3 4 2 6-2-1-2-4-2-6z" fill="#58a84c" />
    <g fill="none" stroke="#59677f" strokeWidth="1.400">
      <rect x="2" y="11" width="6" height="3.500" rx="1.700" />
      <rect x="7.500" y="11" width="6" height="3.500" rx="1.700" />
    </g>
  </svg>
);

const ContextMenu = () => (
  <div role="menu" className="absolute top-[99px] right-0 left-[528px] border border-r-0 border-[#a7abb0] bg-white py-px text-[#222a35] shadow-[2px_3px_4px_rgba(0,0,0,0.3)]">
    <span className="absolute inset-y-px left-[25px] w-px bg-[#e2e4e7]" />
    <MenuItem text="В&ырезать" icon={<CutIcon />} />
    <MenuItem text="&Копировать" icon={<CopyIcon />} />
    <div className="flex h-[22px] items-center">
      <span className="flex w-[27px] justify-center"><PasteIcon /></span>
      <span className="flex-1 bg-[#eff1f5] pl-[7px] leading-[18px] font-semibold">Параметры вставки:</span>
    </div>
    <div className="flex h-[25px] gap-[7px] pl-[30px]">
      <PasteTile kind="paste" title="Вставить" />
      <PasteTile kind="values" title="Значения" />
      <PasteTile kind="fx" title="Формулы" />
      <PasteTile kind="transpose" title="Транспонировать" />
      <PasteTile kind="format" title="Форматирование" />
      <PasteTile kind="link" title="Вставить связь" />
    </div>
    <button role="menuitem" className="relative flex h-6 w-full items-center border border-r-0 border-[#e3c065] bg-linear-to-b from-[#fdf6d8] via-[#f8dc85] to-[#fdeeb0] pr-0.5 pl-[33px]">
      <span className="flex-1 text-left"><Mnemonic text="Специальная вс&тавка..." /></span>
      <span className="mr-2 h-full w-px bg-[#e3c065]" />
      <SideArrow className="text-[#7d8694]" />
    </button>
    <MenuLine />
    <MenuItem text="Вставить скопированные &ячейки..." />
    <MenuItem text="&Удалить..." />
    <MenuItem text="Очистить содер&жимое" />
    <MenuLine />
    <MenuItem text="&Фильтр" arrow />
    <MenuItem text="&Сортировка" arrow />
    <MenuLine />
    <MenuItem text="Вставить приме&чание" icon={<NoteIcon />} />
    <MenuLine />
    <MenuItem text="Формат &ячеек..." icon={<FormatIcon />} />
    <MenuItem text="Вы&брать из раскрывающегося списка..." />
    <MenuItem text="Присвоит&ь имя..." />
    <MenuItem text="Гип&ерссылка..." icon={<GlobeIcon />} />
  </div>
);

const SubHeading = ({ children }: { children: React.ReactNode }) => (
  <h2 className="m-px bg-[#eff1f5] pl-[7px] leading-[18px] font-semibold whitespace-nowrap text-[#2d3642]">{children}</h2>
);

const PasteSubmenu = () => (
  <div role="menu" className="absolute top-[193px] left-[347px] w-[183px] border border-[#a7abb0] bg-white pt-px text-[#222a35] shadow-[3px_3px_4px_rgba(0,0,0,0.35)]">
    <SubHeading>Вставка</SubHeading>
    <div className="grid grid-cols-[repeat(4,23px)] gap-x-[7px] gap-y-1.5 px-1 pt-px pb-[3px]">
      <PasteTile kind="paste" title="Вставить" />
      <PasteTile kind="fx" title="Формулы" />
      <PasteTile kind="fxFormat" title="Формулы и форматы чисел" />
      <PasteTile kind="source" title="Сохранить исходное форматирование" />
      <PasteTile kind="noBorder" title="Без рамки" />
      <PasteTile kind="width" title="Сохранить ширину столбцов" />
      <PasteTile kind="transpose" title="Транспонировать" />
    </div>
    <SubHeading>Вставить значения</SubHeading>
    <div className="flex gap-[7px] px-1 pt-px pb-[3px]">
      <PasteTile kind="values" title="Значения" />
      <PasteTile kind="valuesPct" title="Значения и форматы чисел" />
      <PasteTile kind="valuesBrush" title="Значения и исходное форматирование" />
    </div>
    <SubHeading>Другие параметры вставки</SubHeading>
    <div className="flex gap-[7px] px-1 pt-px pb-[3px]">
      <PasteTile kind="format" title="Форматирование" />
      <PasteTile kind="link" title="Вставить связь" />
      <PasteTile kind="picture" title="Рисунок" />
      <PasteTile kind="pictureLink" title="Связанный рисунок" />
    </div>
    <div className="border-t border-[#e2e4e7] pl-[25px]">
      <button role="menuitem" className="block h-6 w-full border-l border-[#e2e4e7] pl-[9px] text-left whitespace-nowrap">
        <Mnemonic text="Специальная вс&тавка..." />
      </button>
    </div>
  </div>
);

const MiniToolbar = () => (
  <div className="absolute top-[468px] left-[528px] w-[249px] rounded-xs border border-[#a7abb0] bg-white py-0.5 text-black shadow-[2px_2px_3px_rgba(0,0,0,0.2)]">
    <div className="flex items-center">
      <Combo label="Шрифт" value="Calibri" className="w-[62px]" />
      <Combo label="Размер шрифта" value="11" className="-ml-px w-10" />
      <Btn title="Увеличить размер" className="w-[22px]"><GrowFont /></Btn>
      <Btn title="Уменьшить размер" className="w-5"><ShrinkFont /></Btn>
      <Btn title="Денежный формат"><MoneyIcon /></Btn>
      <Caret />
      <Btn title="Процентный формат" className="w-7 text-xs">%</Btn>
      <Btn title="Формат с разделителями" className="w-5">000</Btn>
      <Btn title="Объединить ячейки"><MergeIcon /></Btn>
    </div>
    <div className="flex items-center pt-px">
      <Btn title="Полужирный" className="w-[22px] font-['Liberation_Serif',serif] text-[15px] font-bold">Ж</Btn>
      <Btn title="Курсив" className="w-[22px] font-['Liberation_Serif',serif] text-[15px] font-bold italic">К</Btn>
      <Btn title="По центру" className="w-[22px]"><LinesIcon kind="center" /></Btn>
      <Btn title="Цвет заливки"><FillIcon /></Btn>
      <Caret />
      <Btn title="Цвет текста" className="ml-1 w-6"><FontColorIcon /></Btn>
      <Caret />
      <Btn title="Границы" className="ml-1 w-6"><BordersIcon /></Btn>
      <Caret />
      <Btn title="Увеличить разрядность" className="ml-1 w-[22px]"><DecimalIcon /></Btn>
      <Btn title="Уменьшить разрядность" className="w-[22px]"><DecimalIcon less /></Btn>
      <Btn title="Формат по образцу" className="w-[22px]"><BrushIcon /></Btn>
    </div>
  </div>
);

/* ---------- step marks ---------- */

const StepBox = ({ className }: IconProps) => (
  <span className={clsx("pointer-events-none absolute rounded-[12px] border-[5px] border-[#f00] drop-shadow-[4px_4px_3px_rgba(0,0,0,0.6)]", className)} />
);

const StepBall = ({ n, className }: { n: number; className?: string }) => (
  <span
    className={clsx(
      "absolute flex items-center justify-center rounded-full border border-[#9c3218] bg-radial-[at_35%_25%] from-[#ff9a5e] to-[#ff4717] to-75% font-['DejaVu_Sans',sans-serif] text-2xl leading-none font-bold text-white shadow-[2px_2px_3px_rgba(0,0,0,0.5)] [-webkit-text-stroke:3px_#3c3c3c] [paint-order:stroke_fill]",
      className
    )}
  >
    {n}
  </span>
);

export default function App() {
  return (
    <main className="bg-white pt-8 pr-[46px] pb-8 pl-8 font-['Noto_Sans','Open_Sans',sans-serif] text-[11px]">
      <div className="relative overflow-hidden rounded-t-[3px] bg-linear-to-b from-[#b5d0ea] via-[#dbe8f6] via-10% to-[#a9c8e8] pb-[5px] shadow-[6px_6px_10px_2px_rgba(0,0,0,0.4),0_0_18px_8px_rgba(0,0,0,0.12)]">
        <TitleBar />
        <TabRow />
        <Ribbon />
        <FormulaBar />
        <Sheet />
        <SheetTabs />
        <StatusBar />

        <MiniToolbar />
        <ContextMenu />
        <PasteSubmenu />

        <StepBox className="top-[400px] left-[30px] h-[168px] w-[520px]" />
        <StepBox className="top-[192px] left-[536px] h-[33px] w-[196px]" />
        <StepBox className="top-[332px] left-[344px] h-[42px] w-[42px]" />
        <StepBall n={1} className="top-[368px] left-[109px] h-[54px] w-[54px]" />
        <StepBall n={2} className="top-[185px] left-[705px] h-[49px] w-[49px]" />
        <StepBall n={3} className="top-[339px] left-[305px] h-[50px] w-[50px]" />
      </div>
    </main>
  );
}
